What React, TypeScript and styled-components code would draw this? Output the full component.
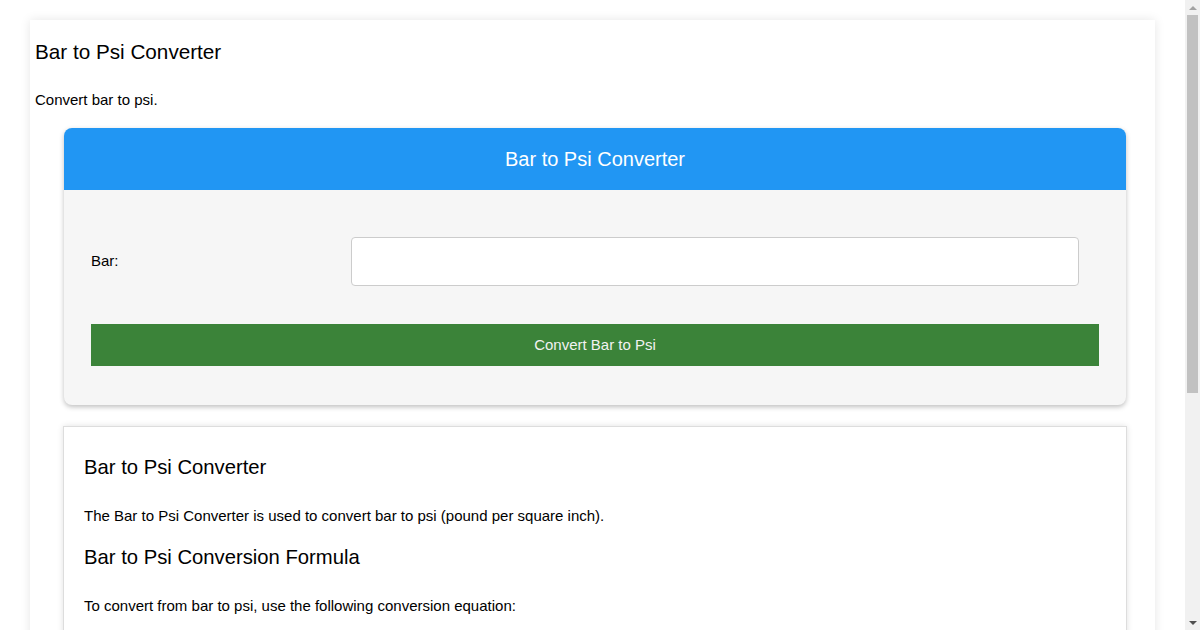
import React from 'react';
import styled, {createGlobalStyle} from 'styled-components';

const GlobalStyle = createGlobalStyle`
  html, body {
    margin: 0;
    padding: 0;
    background: #ffffff;
    font-family: "Liberation Sans", Arial, sans-serif;
    color: #000;
  }
  * {
    box-sizing: border-box;
  }
`;

const Page = styled.main`
  margin: 20px 45px 40px 30px;
  padding: 5px 5px 30px;
  background: #ffffff;
  box-shadow: 0 0 10px rgba(0, 0, 0, 0.1);
`;

const PageTitle = styled.h1`
  margin: 15px 0 0;
  font-size: 20.7px;
  font-weight: normal;
  line-height: 23px;
`;

const Intro = styled.p`
  margin: 28px 0 0;
  font-size: 15px;
  line-height: 17px;
`;

const Converter = styled.section`
  width: 1062px;
  margin: 20px 0 0 29px;
  border-radius: 8px;
  overflow: hidden;
  background: #f6f6f6;
  box-shadow: 0 2px 5px rgba(0, 0, 0, 0.25);
`;

const ConverterHeader = styled.div`
  height: 62px;
  display: flex;
  align-items: center;
  justify-content: center;
  background: #2196f3;
  color: #ffffff;
  font-size: 20px;
`;

const ConverterBody = styled.form`
  padding: 47px 27px 39px;
  display: flex;
  flex-direction: column;
  gap: 38px;
`;

const FieldRow = styled.div`
  display: flex;
  align-items: center;
`;

const Label = styled.label`
  width: 260px;
  padding-bottom: 3px;
  font-size: 15px;
`;

const Input = styled.input`
  width: 728px;
  height: 49px;
  border: 1px solid #cccccc;
  border-radius: 4px;
  background: #ffffff;
  padding: 0 10px;
  font-size: 15px;
  font-family: inherit;
  outline: none;
`;

const ConvertButton = styled.button`
  width: 100%;
  height: 42px;
  padding: 0 0 1px;
  border: none;
  background: #3b8339;
  color: #f2f2f2;
  font-size: 15px;
  font-family: inherit;
  cursor: pointer;
`;

const Article = styled.article`
  width: 1064px;
  margin: 21px 0 0 28px;
  padding: 9px 20px 20px;
  border: 1px solid #dddddd;
  background: #ffffff;
  box-shadow: 0 0 6px rgba(0, 0, 0, 0.12);
`;

const SectionTitle = styled.h2`
  margin: 20px 0 28px;
  font-size: 20.25px;
  font-weight: normal;
  line-height: 23px;
`;

const Text = styled.p`
  margin: 0 0 22px;
  font-size: 15px;
  line-height: 17px;
`;

const Formula = styled.p`
  margin: 0 0 22px;
  font-size: 15px;
  font-weight: bold;
`;

/* the window's scroll bar, drawn over the right edge */
const ScrollBar = styled.div`
  position: fixed;
  top: 0;
  right: 0;
  width: 15px;
  height: 100vh;
  background: #f1f1f1;
  display: flex;
  flex-direction: column;
  align-items: center;
`;

const Arrow = styled.div<{ $down?: boolean }>`
  width: 15px;
  height: 15px;
  flex: none;
  display: flex;
  align-items: center;
  justify-content: center;
  &::before {
    content: "";
    border-left: 4px solid transparent;
    border-right: 4px solid transparent;
    ${p => p.$down ? 'border-top: 4px solid #505050;' : 'border-bottom: 4px solid #a3a3a3;'}
  }
`;

const Thumb = styled.div`
  width: 11px;
  height: 378px;
  background: #c1c1c1;
`;

const Track = styled.div`
  flex: 1;
`;

export default function App() {
	return (
		<>
			<GlobalStyle/>
			<Page>
				<PageTitle>Bar to Psi Converter</PageTitle>
				<Intro>Convert bar to psi.</Intro>
				<Converter>
					<ConverterHeader>Bar to Psi Converter</ConverterHeader>
					<ConverterBody onSubmit={e => e.preventDefault()}>
						<FieldRow>
							<Label htmlFor="bar">Bar:</Label>
							<Input id="bar" type="text"/>
						</FieldRow>
						<ConvertButton type="submit">Convert Bar to Psi</ConvertButton>
					</ConverterBody>
				</Converter>
				<Article>
					<SectionTitle>Bar to Psi Converter</SectionTitle>
					<Text>The Bar to Psi Converter is used to convert bar to psi (pound per square inch).</Text>
					<SectionTitle>Bar to Psi Conversion Formula</SectionTitle>
					<Text>To convert from bar to psi, use the following conversion equation:</Text>
					<Formula>psi = bar × 14.5038</Formula>
					<Text>For example, 2 bar is equal to 2 × 14.5038 = 29.0076 psi.</Text>
				</Article>
			</Page>
			<ScrollBar aria-hidden="true">
				<Arrow/>
				<Thumb/>
				<Track/>
				<Arrow $down/>
			</ScrollBar>
		</>
	);
}
